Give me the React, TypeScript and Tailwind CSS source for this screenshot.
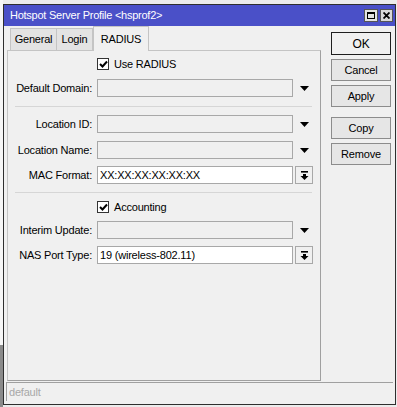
import React from "react";

function Arrow() {
  return (
    <svg width="9" height="5" viewBox="0 0 9 5">
      <path d="M0 0H9L4.5 5Z" fill="#000" />
    </svg>
  );
}

function SpinBtn() {
  return (
    <div className="ml-[2px] w-[18px] h-[18px] border border-[#a8a8a8] bg-[#f0f0f0] flex items-center justify-center">
      <svg width="9" height="9" viewBox="0 0 9 9">
        <rect x="1" y="0" width="7" height="1.6" fill="#000" />
        <path d="M3 3H6V5H8.5L4.5 9L0.5 5H3Z" fill="#000" />
      </svg>
    </div>
  );
}

function Check({ label }: { label: string }) {
  return (
    <div className="h-[16px] flex items-center pl-[89px]">
      <div className="w-[12px] h-[12px] border border-[#333] bg-white flex items-center justify-center">
        <svg width="9" height="8" viewBox="0 0 9 8">
          <path d="M1 4L3.5 6.5L8 1.5" stroke="#000" strokeWidth="2" fill="none" />
        </svg>
      </div>
      <span className="ml-[5px]">{label}</span>
    </div>
  );
}

function Field({
  label,
  value = "",
  white = false,
  spin = false,
  mt,
}: {
  label: string;
  value?: string;
  white?: boolean;
  spin?: boolean;
  mt: string;
}) {
  return (
    <div className={`flex items-center h-[18px] ${mt}`}>
      <div className="w-[84px] text-right whitespace-nowrap">{label}</div>
      <div
        className={`ml-[5px] w-[196px] h-[18px] border border-[#a8a8a8] flex items-center pl-[2px] ${
          white ? "bg-white" : "bg-[#f0f0f0]"
        }`}
      >
        {value}
      </div>
      {spin ? (
        <SpinBtn />
      ) : (
        <div className="w-[20px] flex justify-center pl-[3px]">
          <Arrow />
        </div>
      )}
    </div>
  );
}

const buttons = [
  { t: "Cancel", mt: "mt-[4px]" },
  { t: "Apply", mt: "mt-[4px]" },
  { t: "Copy", mt: "mt-[10px]" },
  { t: "Remove", mt: "mt-[4px]" },
];

export default function App() {
  return (
    <div className="w-[397px] h-[407px] bg-[#ececec] flex overflow-hidden text-[11px] tracking-[-0.2px] text-black font-['Liberation_Sans',Arial,sans-serif]">
      <div className="w-[3px] flex flex-col">
        <div className="h-[345px] bg-[#f6f6f6]" />
        <div className="flex-1 bg-[#8a8a8a]" />
      </div>
      <div className="mt-[4px] w-[393px] h-[401px] border border-[#2e2e2e] bg-[#f0f0f0] flex flex-col">
        {/* title bar */}
        <div className="h-[21px] bg-[#4a50c8] flex items-center pl-[6px] pr-[2px]">
          <span className="text-white tracking-[-0.25px]">Hotspot Server Profile &lt;hsprof2&gt;</span>
          <div className="ml-auto flex items-center gap-[2px]">
            <div className="w-[14px] h-[13px] bg-[#e4e4e4] border border-[#555] flex items-center justify-center">
              <div className="w-[8px] h-[7px] border border-black border-t-2" />
            </div>
            <div className="w-[13px] h-[13px] bg-[#d8d8d8] border border-[#555] flex items-center justify-center">
              <svg width="7" height="7" viewBox="0 0 7 7">
                <path d="M0.5 0.5L6.5 6.5M6.5 0.5L0.5 6.5" stroke="#000" strokeWidth="1.8" />
              </svg>
            </div>
          </div>
        </div>

        <div className="flex h-[355px]">
          {/* left column */}
          <div className="w-[317px] pl-[3px] flex flex-col">
            <div className="h-[24px] flex items-end pl-[3px]">
              <div className="w-[47px] h-[22px] bg-[#e3e3e3] border border-b-0 border-[#c4c4c4] flex items-center justify-center">
                General
              </div>
              <div className="w-[36px] h-[22px] bg-[#e3e3e3] border border-b-0 border-l-0 border-[#c4c4c4] flex items-center justify-center">
                Login
              </div>
              <div className="relative z-10 -mb-px w-[56px] h-[25px] bg-[#f0f0f0] border border-b-0 border-[#c4c4c4] flex items-center justify-center">
                RADIUS
              </div>
            </div>
            <div className="h-[331px] border border-[#c4c4c4] border-r-[#a0a0a0] border-b-[#a0a0a0] flex flex-col pt-[5px]">
              <Check label="Use RADIUS" />
              <Field label="Default Domain:" mt="mt-[7px]" />
              <div className="mt-[9px] ml-[7px] w-[297px] h-px bg-[#d6d6d6]" />
              <Field label="Location ID:" mt="mt-[8px]" />
              <Field label="Location Name:" mt="mt-[8px]" />
              <Field label="MAC Format:" value="XX:XX:XX:XX:XX:XX" white spin mt="mt-[7px]" />
              <div className="mt-[8px] ml-[7px] w-[297px] h-px bg-[#d6d6d6]" />
              <div className="mt-[6px]">
                <Check label="Accounting" />
              </div>
              <Field label="Interim Update:" mt="mt-[6px]" />
              <Field label="NAS Port Type:" value="19 (wireless-802.11)" white spin mt="mt-[7px]" />
            </div>
          </div>

          {/* buttons */}
          <div className="ml-[10px] pt-[6px] flex flex-col">
            <div className="w-[60px] h-[23px] border border-[#1e1e1e] bg-[#f0f0f0] flex items-center justify-center text-[12px]">
              OK
            </div>
            {buttons.map((b) => (
              <div
                key={b.t}
                className={`${b.mt} w-[60px] h-[22px] border border-[#8c8c8c] bg-[#e6e6e6] flex items-center justify-center`}
              >
                {b.t}
              </div>
            ))}
          </div>
        </div>

        {/* status bar */}
        <div className="mt-px ml-[2px] w-[387px] h-[19px] border-t border-l border-[#a0a0a0] flex items-center pl-[2px] text-[#a8a8a8]">
          default
        </div>
      </div>
    </div>
  );
}
